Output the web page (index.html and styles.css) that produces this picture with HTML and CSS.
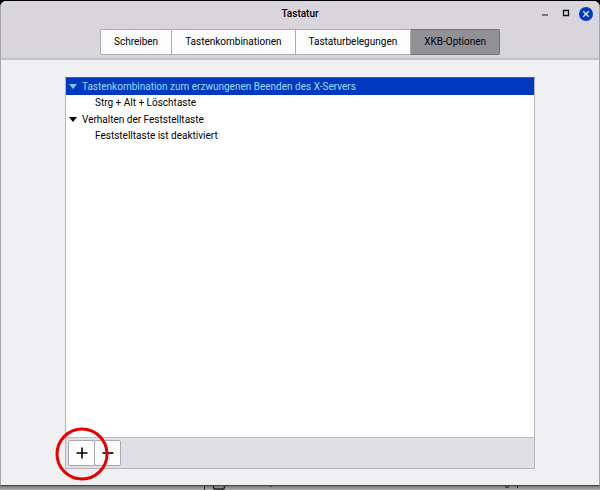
FILE: index.html
```
<!DOCTYPE html>
<html lang="de">
<head>
    <meta charset="UTF-8" />
    <meta name="viewport" content="width=device-width, initial-scale=1" />
    <title>Tastatur</title>
    <link rel="stylesheet" href="styles.css">
</head>
<body>
    <div class="window">
        <header class="header">
            <div class="titlebar">
                <h1>Tastatur</h1>
                <div class="window-buttons">
                    <button aria-label="Minimieren"><svg width="14" height="14"><path d="M5 7h6v2H5z" fill="#77767c"/></svg></button>
                    <button aria-label="Maximieren"><svg width="14" height="14"><path d="M5.5 3.5h5v5h-5z" fill="none" stroke="#111" stroke-width="1.3"/></svg></button>
                    <button aria-label="Schließen"><svg width="14" height="14"><circle cx="7" cy="7" r="7" fill="#0039c0"/><path d="M4.2 4.2l5.6 5.6M9.8 4.2L4.2 9.8" stroke="#d9f0ff" stroke-width="1.3"/></svg></button>
                </div>
            </div>
            <nav class="tabs">
                <button class="tab">Schreiben</button>
                <button class="tab">Tastenkombinationen</button>
                <button class="tab">Tastaturbelegungen</button>
                <button class="tab active">XKB-Optionen</button>
            </nav>
        </header>
        <main class="content">
            <div class="panel">
                <div class="tree">
                    <details open>
                        <summary class="selected"><svg class="arrow" width="8" height="5"><path d="M0 0h8L4 5z"/></svg>Tastenkombination zum erzwungenen Beenden des X-Servers</summary>
                        <div class="option">Strg + Alt + Löschtaste</div>
                    </details>
                    <details open>
                        <summary><svg class="arrow" width="8" height="5"><path d="M0 0h8L4 5z"/></svg>Verhalten der Feststelltaste</summary>
                        <div class="option">Feststelltaste ist deaktiviert</div>
                    </details>
                </div>
                <div class="toolbar">
                    <button class="tool" aria-label="Hinzufügen"><svg width="12" height="12"><path d="M0.5 6h11M6 0.5v11" stroke="#000" stroke-width="1.6"/></svg></button>
                    <button class="tool" aria-label="Entfernen"><svg width="12" height="12"><path d="M0.5 6h11" stroke="#000" stroke-width="1.6"/></svg></button>
                    <svg class="marker" width="54" height="54"><circle cx="27" cy="27" r="25" fill="none" stroke="#e60000" stroke-width="3"/></svg>
                </div>
            </div>
        </main>
    </div>
    <!-- edge of the window behind -->
    <svg class="behind" width="100%" height="4">
        <path d="M204.5 0v4" stroke="#333"/>
        <path d="M213.5 0v1q0 2 2 2h7q2 0 2-2V0" fill="none" stroke="#222" stroke-width="1.4"/>
        <path d="M271 0v1M517.5 0v2" stroke="#222"/>
        <path d="M505 1h4" stroke="#111"/>
    </svg>
</body>
</html>
```
FILE: styles.css
```
* {
    box-sizing: border-box;
}
body {
    margin: 0;
    padding-top: 1px;
    min-height: 100vh;
    display: flex;
    flex-direction: column;
    background: #000;
    color: #000;
    font-family: Roboto, "Noto Sans", sans-serif;
    font-size: 10px;
    line-height: 16px;
}
button {
    font: inherit;
    color: inherit;
    cursor: pointer;
}
svg {
    display: block;
}
.window {
    flex: 1;
    display: flex;
    flex-direction: column;
    background: #f0f0f3;
    border-left: 1px solid #a5a5a8;
    border-right: 1px solid #a5a5a8;
    border-bottom: 1px solid #444;
    border-radius: 6px 6px 0 0;
    overflow: hidden;
}
.header {
    background: #d8d6dc;
    border-bottom: 2px solid #c4c2c8;
    padding-bottom: 3px;
}
.titlebar {
    display: grid;
    grid-template-columns: 1fr auto 1fr;
    align-items: center;
    height: 26px;
    padding: 0 6px;
}
h1 {
    grid-column: 2;
    margin: 0;
    font-size: 10px;
    font-weight: 500;
}
.window-buttons {
    display: flex;
    justify-content: flex-end;
    gap: 7px;
}
.window-buttons button {
    padding: 0;
    border: none;
    background: none;
}
.tabs {
    display: flex;
    justify-content: center;
    margin-top: 2px;
}
.tab {
    height: 26px;
    padding: 0 13px;
    background: #fcfcfc;
    border: 1px solid #aaa9ad;
    border-left-width: 0;
}
.tab:first-child {
    border-left-width: 1px;
    border-radius: 2px 0 0 2px;
}
.tab:last-child {
    border-radius: 0 2px 2px 0;
}
.tab.active {
    background: #919095;
    border-color: #737277;
}
.content {
    flex: 1;
    display: flex;
    padding: 17px 64px 16px;
}
.panel {
    flex: 1;
    display: flex;
    flex-direction: column;
    border: 1px solid #b5b4be;
    border-top-color: #2b62b0;
}
.tree {
    flex: 1;
    background: #fff;
}
summary {
    display: flex;
    align-items: center;
    gap: 5px;
    height: 17px;
    padding-left: 3px;
    list-style: none;
    cursor: default;
}
.arrow {
    fill: #000;
}
.selected {
    background: #0039bf;
    color: #9bdcff;
}
.selected .arrow {
    fill: #7cc8f5;
}
.option {
    height: 16px;
    padding-left: 29px;
}
.toolbar {
    position: relative;
    display: flex;
    padding: 2px;
    background: #e0dfe4;
    border-top: 1px solid #bfbec8;
}
.tool {
    display: flex;
    align-items: center;
    justify-content: center;
    width: 27px;
    height: 26px;
    padding: 0;
    background: #fcfcfc;
    border: 1px solid #aaa9b2;
    border-radius: 2px;
}
.tool + .tool {
    margin-left: -1px;
}
.marker {
    position: absolute;
    left: -11px;
    top: -11px;
    pointer-events: none;
}
.behind {
    background: linear-gradient(#777, #b2b2b2);
}
```
